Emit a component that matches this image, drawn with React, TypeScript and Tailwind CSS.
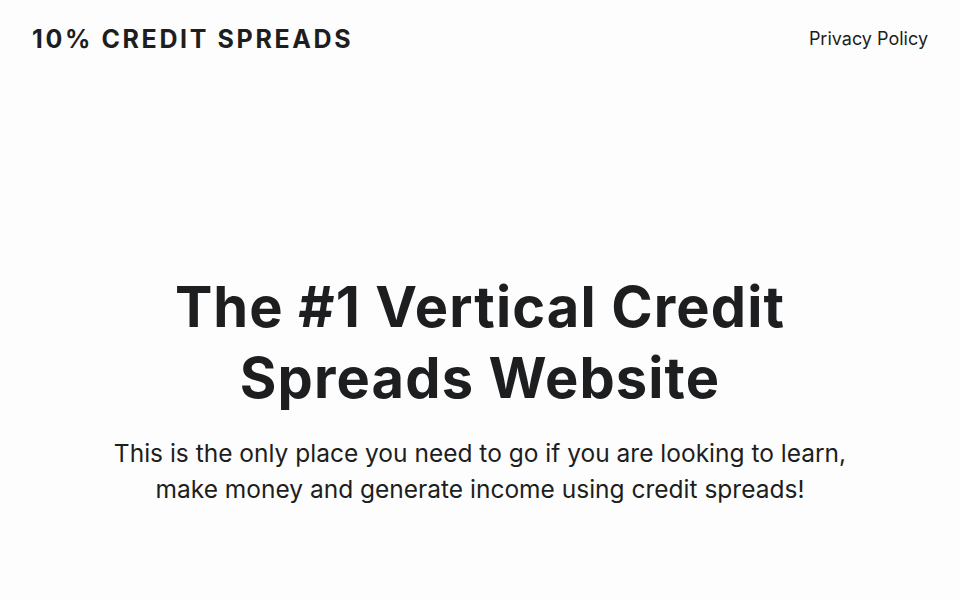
export default function App() {
  return (
    <div
      className="flex h-[600px] w-full flex-col bg-[#fdfdfd] text-[#1d1e20]"
      style={{ fontFamily: 'Inter, "Noto Sans", sans-serif' }}
    >
      <header className="flex items-center justify-between px-8 pt-6">
        <a href="#" className="text-[25px] font-bold leading-[30px] tracking-[0.105em]">
          10% CREDIT SPREADS
        </a>
        <a href="#" className="text-[18px] leading-[26px]">
          Privacy Policy
        </a>
      </header>
      <main className="flex flex-1 flex-col items-center px-8 pt-[218px] text-center">
        <h1 className="text-[56px] font-bold leading-[71px] tracking-[0.02em]">
          The #1 Vertical Credit
          <br />
          Spreads Website
        </h1>
        <p className="mt-[21px] text-[24.5px] leading-[36px]">
          This is the only place you need to go if you are looking to learn,
          <br />
          make money and generate income using credit spreads!
        </p>
      </main>
    </div>
  );
}
